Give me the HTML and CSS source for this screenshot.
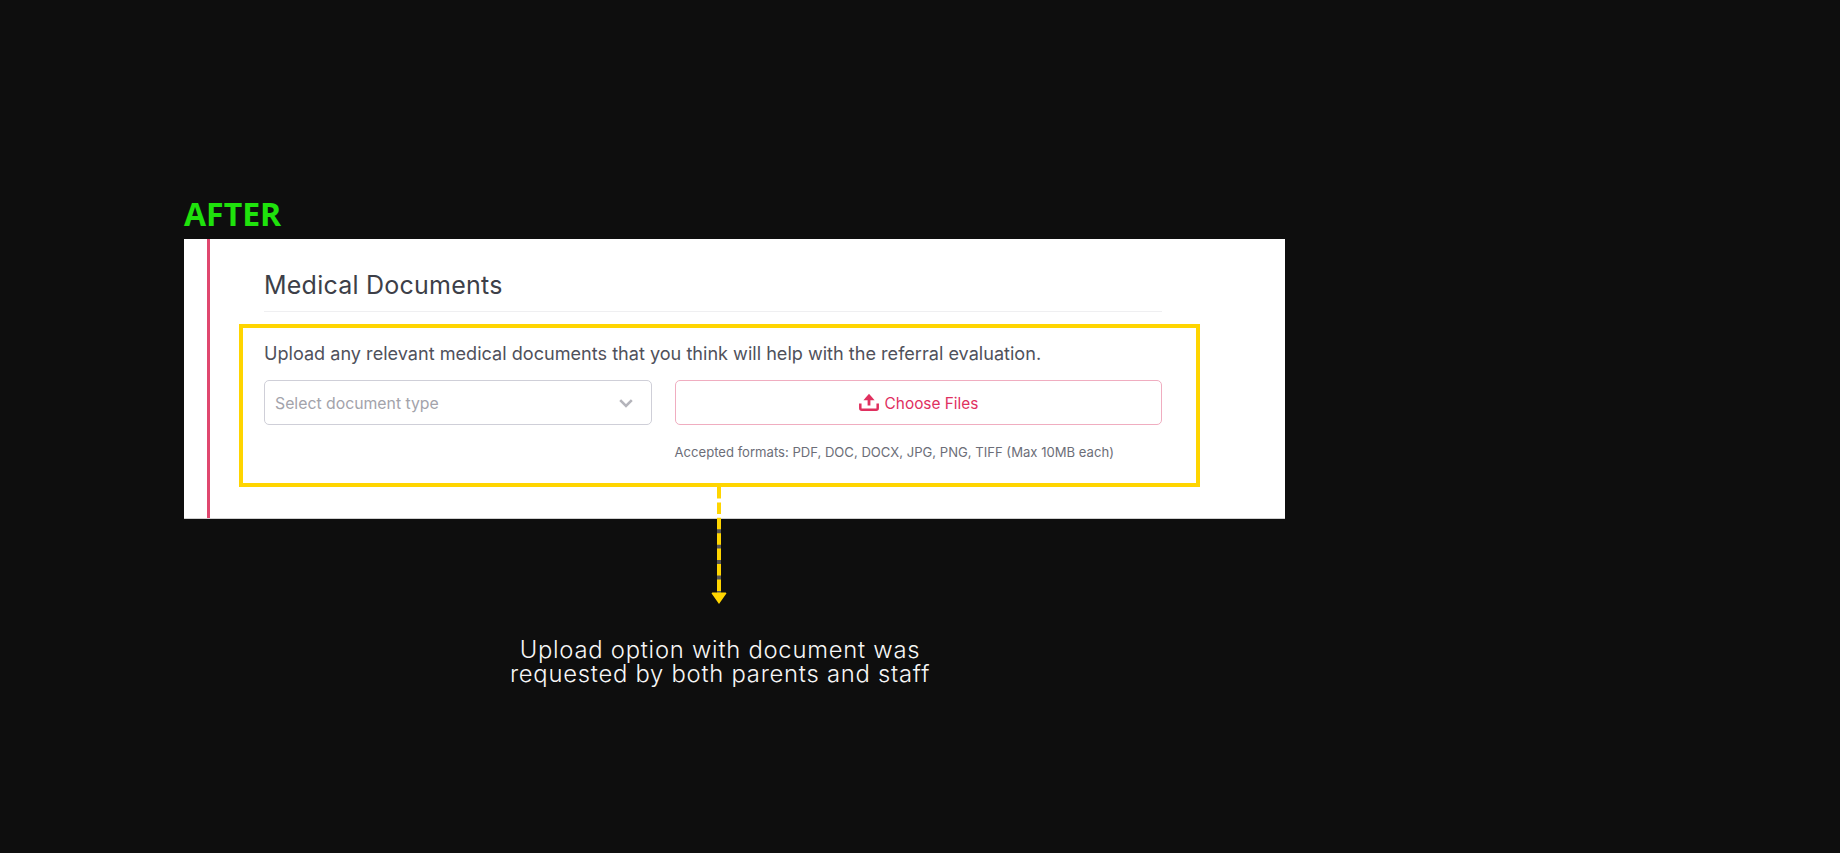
FILE: index.html
```html
<!DOCTYPE html>
<html lang="en">
<head>
<meta charset="utf-8">
<title>After: Medical Documents</title>
<link rel="stylesheet" href="styles.css">
</head>
<body>
<main class="stage">
  <h2 class="tag">AFTER</h2>
  <section class="panel">
    <div class="panel-inner">
      <h3 class="title">Medical Documents</h3>
      <div class="highlight">
        <p class="intro">Upload any relevant medical documents that you think will help with the referral evaluation.</p>
        <div class="fields">
          <div class="select">
            <span>Select document type</span>
            <svg class="chevron" viewBox="0 0 14 9" width="14" height="9" aria-hidden="true"><path d="M1.2 1.2 7 7l5.8-5.8" fill="none" stroke="#b4b4bb" stroke-width="2.6"/></svg>
          </div>
          <div class="upload">
            <button class="choose" type="button">
              <svg class="upload-icon" viewBox="0 0 20 18" width="20" height="18" aria-hidden="true"><path d="M10 12.5V3" fill="none" stroke="#e0305f" stroke-width="2.8"/><path d="M4.4 7.2 10 .8l5.6 6.4z" fill="#e0305f"/><path d="M1.3 10.5v4.7a1.5 1.5 0 0 0 1.5 1.5h14.4a1.5 1.5 0 0 0 1.5-1.5v-4.7" fill="none" stroke="#e0305f" stroke-width="2.5"/></svg>
              <span>Choose Files</span>
            </button>
            <p class="formats">Accepted formats: PDF, DOC, DOCX, JPG, PNG, TIFF (Max 10MB each)</p>
          </div>
        </div>
      </div>
    </div>
  </section>
  <p class="caption">Upload option with document was<br>requested by both parents and staff</p>
  <svg class="arrow" viewBox="0 0 16 118" width="16" height="118" aria-hidden="true">
    <path d="M8 0V106" stroke="#fff" stroke-opacity=".3" stroke-width="4" fill="none"/>
    <path d="M8 0V106" stroke="#ffd500" stroke-width="4" stroke-dasharray="11.5 3.9" fill="none"/>
    <path d="M1.4 105.5h13.2a.8.8 0 0 1 .6 1.3L8 117 .8 106.8a.8.8 0 0 1 .6-1.3z" fill="#ffd500"/>
  </svg>
</main>
</body>
</html>
```
FILE: styles.css
```css
* { box-sizing: border-box; }
html, body { margin: 0; height: 100%; }
body { background: #0e0e0e; font-family: "Inter", "Liberation Sans", sans-serif; overflow: hidden; }
.stage { position: relative; height: 853px; padding: 194px 0 0 184px; }
.tag { margin: 0; height: 45px; font: 700 32px/40px "Open Sans", "Noto Sans", sans-serif; color: #1fe20c; }
.panel { width: 1101px; height: 280px; background: #fff; padding-left: 23px; border-bottom: 1px solid #d0d0d0; }
.panel-inner { height: 100%; border-left: 3px solid #e0476f; padding-left: 29px; }
.title { margin: 0 0 12px 25px; width: 898px; height: 73px; padding-top: 30px; border-bottom: 1px solid #efeff1; font: 400 25px/32px "Inter", sans-serif; letter-spacing: .23px; color: #3d3f48; }
.highlight { width: 961px; height: 163px; border: 4px solid #ffd500; padding: 13px 0 0 21px; }
.intro { margin: 0 0 15px; font: 400 18.1px/24px "Inter", sans-serif; color: #4f515b; }
.fields { display: flex; gap: 22.5px; align-items: flex-start; }
.select { width: 388px; height: 45px; display: flex; align-items: center; justify-content: space-between; padding: 1px 18px 0 10px; border: 1.5px solid #cfcfd8; border-radius: 5px; font-size: 15.8px; color: #a3a3ab; }
.upload { width: 487px; }
.choose { width: 100%; height: 45px; display: flex; align-items: center; justify-content: center; gap: 6px; background: #fff; border: 1.5px solid #f0adc0; border-radius: 5px; font: 400 15.4px "Inter", sans-serif; color: #e0305f; padding: 1px 0 0 1px; }
.upload-icon { margin-top: -2px; }
.formats { margin: 18px 0 0; font: 400 13.1px/18px "Inter", sans-serif; color: #6c6e78; }
.caption { margin: 119px 0 0 286px; width: 500px; text-align: center; font: 300 23.8px/24px "Inter", sans-serif; letter-spacing: .75px; color: #f6f6f6; }
.arrow { position: absolute; left: 711px; top: 487px; }
```
